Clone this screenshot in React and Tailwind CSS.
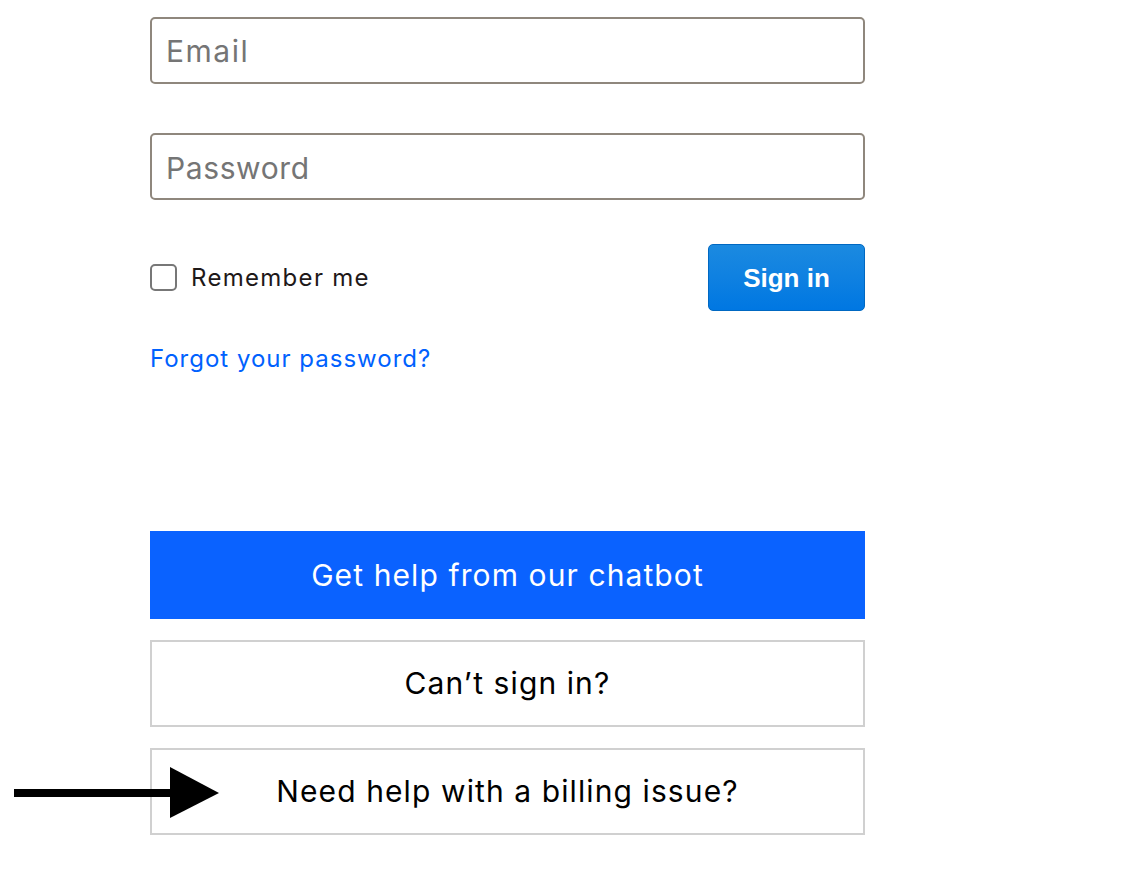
export default function App() {
  return (
    <div className="relative w-[1124px] h-[890px] bg-white font-['Inter',sans-serif]">
      <div className="ml-[150px] w-[715px] pt-[17px] flex flex-col">
        <div className="h-[67px] pt-[1px] border-2 border-[#8f877d] rounded-[5px] flex items-center pl-[14px] text-[30px] tracking-[1.5px] text-[#757575]">
          Email
        </div>
        <div className="mt-[49px] h-[67px] pt-[4px] border-2 border-[#8f877d] rounded-[5px] flex items-center pl-[14px] text-[30px] tracking-[0.6px] text-[#757575]">
          Password
        </div>
        <div className="mt-[44px] flex items-center justify-between">
          <label className="flex items-center gap-[14px]">
            <span className="w-[27px] h-[27px] border-2 border-[#777] rounded-[5px]" />
            <span className="text-[24px] tracking-[1.3px] text-[#1e1919]">Remember me</span>
          </label>
          <button className="w-[157px] h-[67px] pt-[2px] rounded-[5px] border border-[#0068c2] bg-gradient-to-b from-[#1b8ae0] to-[#0077e2] text-white font-bold text-[26px] font-['Liberation_Sans',sans-serif]">
            Sign in
          </button>
        </div>
        <a className="mt-[30px] text-[24px] tracking-[1px] text-[#0061fe]">Forgot your password?</a>
        <button className="mt-[154px] h-[88px] bg-[#0a62ff] text-white text-[30px] tracking-[1.1px] flex items-center justify-center">
          Get help from our chatbot
        </button>
        <button className="mt-[21px] h-[87px] border-2 border-[#d0d0d0] text-black text-[30px] tracking-[1.1px] flex items-center justify-center">
          Can’t sign in?
        </button>
        <button className="mt-[21px] h-[87px] border-2 border-[#d0d0d0] text-black text-[30px] tracking-[1.1px] flex items-center justify-center">
          Need help with a billing issue?
        </button>
      </div>
      <svg className="absolute left-[14px] top-[767px]" width="206" height="52" viewBox="0 0 206 52">
        <rect x="0" y="22" width="160" height="8" fill="#000" />
        <polygon points="156,0 205,26 156,51" fill="#000" />
      </svg>
    </div>
  );
}
